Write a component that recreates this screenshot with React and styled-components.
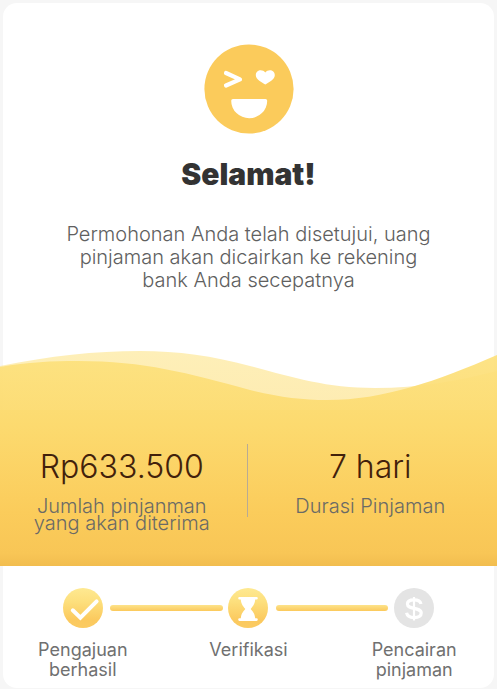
import React from "react";
import styled, { createGlobalStyle } from "styled-components";

const GlobalStyle = createGlobalStyle`
  *, *::before, *::after { box-sizing: border-box; }
  body {
    margin: 0;
    background: #f6f6f6;
    color: #606060;
    font-family: Inter, "Liberation Sans", sans-serif;
    font-weight: 300;
  }
  h1, p, dl, dt, dd, ol { margin: 0; padding: 0; }
`;

const Page = styled.main`
  padding: 3px 0 1px;
`;

const Intro = styled.section`
  display: flex;
  flex-direction: column;
  align-items: center;
  height: 347px;
  margin: 0 3px;
  padding: 41px 58px 0;
  background: #fff;
  border-radius: 14px 14px 0 0;
  text-align: center;
`;

const Face = styled.svg`
  display: block;
  flex: none;
  width: 90px;
  height: 90px;
`;

const Title = styled.h1`
  margin-top: 20px;
  color: #333;
  font-size: 30px;
  font-weight: 900;
  line-height: 40px;
`;

const Message = styled.p`
  margin-top: 29px;
  font-size: 20px;
  line-height: 23px;
`;

const Summary = styled.section`
  position: relative;
  background: linear-gradient(#fff, #fff) center / calc(100% - 6px) 100% no-repeat;
`;

const Wave = styled.svg`
  position: absolute;
  inset: 0;
  display: block;
  width: 100%;
  height: 100%;
`;

const Facts = styled.dl`
  position: relative;
  display: grid;
  grid-template-columns: 49fr 51fr;
  padding: 94px 0 32px;
`;

const Fact = styled.div`
  display: flex;
  flex-direction: column-reverse;
  justify-content: flex-end;
  min-height: 90px;
  text-align: center;

  & + &::before {
    content: "";
    position: absolute;
    top: 94px;
    left: calc(50% - 2px);
    width: 1px;
    height: 73px;
    background: #b9ab93;
  }
`;

const FactValue = styled.dd`
  color: #42210b;
  font-size: 32px;
  line-height: 46px;
`;

const FactLabel = styled.dt`
  margin-top: 8px;
  padding: 0 24px;
  color: #6a6a66;
  font-size: 20px;
  line-height: 17px;
`;

const Progress = styled.section`
  margin: 0 3px;
  padding: 22px 0 8px;
  background: #fff;
  border-radius: 0 0 14px 14px;
`;

const Steps = styled.ol`
  display: grid;
  grid-template-columns: 1fr 1fr 1fr;
  margin: 0 -3px;
  list-style: none;
`;

const Step = styled.li`
  position: relative;
  display: flex;
  flex-direction: column;
  align-items: center;
  text-align: center;

  & + &::before {
    content: "";
    position: absolute;
    top: 17px;
    right: calc(50% + 26px);
    width: calc(100% - 53px);
    height: 6px;
    border-radius: 3px;
    background: linear-gradient(#fde38a, #fbc95c);
  }
`;

const StepIcon = styled.svg`
  display: block;
  width: 40px;
  height: 40px;
`;

const StepLabel = styled.span`
  max-width: 110px;
  margin-top: 12px;
  font-size: 18px;
  font-weight: 400;
  line-height: 20px;
  color: #707070;
`;

function WinkingFace() {
  return (
    <Face viewBox="0 0 90 90" aria-hidden="true">
      <circle cx="45" cy="45" r="44.6" fill="#fbcb5b" />
      <path d="M22 29 36 35.300 22 41.500" fill="none" stroke="#fff" strokeWidth="4.200" strokeLinecap="round" strokeLinejoin="round" />
      <path d="M61.300 40.500C58 38.500 51.800 35.500 51.800 31.200C51.800 25.800 58.500 24.700 61.300 28.600C64.100 24.700 70.800 25.800 70.800 31.200C70.800 35.500 64.600 38.500 61.300 40.500Z" fill="#fff" />
      <path d="M29 55H61.500Q63.200 55 63.200 56.700A18 17.500 0 0 1 27.200 56.700Q27.200 55 29 55Z" fill="#fff" />
    </Face>
  );
}

function WaveBackdrop() {
  return (
    <Wave viewBox="0 0 497 216" preserveAspectRatio="none" aria-hidden="true">
      <defs>
        <linearGradient id="wave-fill" gradientUnits="userSpaceOnUse" x1="0" y1="0" x2="0" y2="216">
          <stop offset="0" stopColor="#fde27e" />
          <stop offset="0.350" stopColor="#fcda6f" />
          <stop offset="0.750" stopColor="#fbcc5b" />
          <stop offset="0.940" stopColor="#f8c656" />
          <stop offset="1" stopColor="#f2bd4f" />
        </linearGradient>
      </defs>
      <path d="M0 16C50 6 95 1 140 1C178 1 213 6 250 16C292 27 325 38 375 38C420 38 457 31 497 21V216H0Z" fill="url(#wave-fill)" opacity="0.550" />
      <path d="M0 17C28 12 52 11 78 11C145 11 187 23 250 40C279 47 302 50 327 50C384 50 437 31 497 5V216H0Z" fill="url(#wave-fill)" opacity="0.930" />
      <path d="M0 60H497V216H0Z" fill="url(#wave-fill)" />
    </Wave>
  );
}

function IconFill({ id }) {
  return (
    <defs>
      <linearGradient id={id} x1="0" y1="0" x2="0" y2="1">
        <stop offset="0" stopColor="#fee991" />
        <stop offset="0.350" stopColor="#fddf7c" />
        <stop offset="0.800" stopColor="#fbc95e" />
        <stop offset="1" stopColor="#fbcb62" />
      </linearGradient>
    </defs>
  );
}

function DoneIcon() {
  return (
    <StepIcon viewBox="0 0 40 40" aria-hidden="true">
      <IconFill id="done-fill" />
      <circle cx="20" cy="20" r="20" fill="url(#done-fill)" />
      <path d="M9.800 22.300 17.400 29.700 33.600 13.400" fill="none" stroke="#fff" strokeWidth="4" strokeLinecap="round" />
    </StepIcon>
  );
}

function HourglassIcon() {
  return (
    <StepIcon viewBox="0 0 40 40" aria-hidden="true">
      <IconFill id="wait-fill" />
      <circle cx="20" cy="20" r="20" fill="url(#wait-fill)" />
      <path d="M11.500 10.200H28.500M11.500 31.600H28.500" stroke="#fff" strokeWidth="2.600" strokeLinecap="round" />
      <path d="M12.800 10.500H27.200C27.200 15.500 25.500 17.500 22.700 20.900C25.500 24.300 27.200 26.300 27.200 31.300H12.800C12.800 26.300 14.500 24.300 17.300 20.900C14.500 17.500 12.800 15.500 12.800 10.500Z" fill="#fff" />
    </StepIcon>
  );
}

function PayoutIcon() {
  return (
    <StepIcon viewBox="0 0 40 40" aria-hidden="true">
      <circle cx="20" cy="20" r="20" fill="#e4e4e4" />
      <path d="M27 16C26.300 13 23.700 11.900 20 11.900C16.200 11.900 13.400 13.400 13.400 16.100C13.400 22 27.200 18.600 27.200 25.100C27.200 28.200 24 29.600 20 29.600C16 29.600 13.200 28.200 12.600 24.800" fill="none" stroke="#fff" strokeWidth="3.200" />
      <path d="M20 9V32.500" stroke="#fff" strokeWidth="2.200" />
    </StepIcon>
  );
}

const facts = [
  { value: "Rp633.500", label: ["Jumlah pinjanman", "yang akan diterima"] },
  { value: "7 hari", label: ["Durasi Pinjaman"] },
];

const steps = [
  { label: "Pengajuan berhasil", Icon: DoneIcon },
  { label: "Verifikasi", Icon: HourglassIcon },
  { label: "Pencairan pinjaman", Icon: PayoutIcon },
];

export default function App() {
  return (
    <>
      <GlobalStyle />
      <Page>
        <Intro>
          <WinkingFace />
          <Title>Selamat!</Title>
          <Message>
            Permohonan Anda telah disetujui, uang pinjaman akan dicairkan ke
            rekening bank Anda secepatnya
          </Message>
        </Intro>
        <Summary>
          <WaveBackdrop />
          <Facts>
            {facts.map(({ value, label }) => (
              <Fact key={value}>
                <FactLabel>
                  {label.map((line, i) => (
                    <React.Fragment key={line}>
                      {i > 0 && <br />}
                      {line}
                    </React.Fragment>
                  ))}
                </FactLabel>
                <FactValue>{value}</FactValue>
              </Fact>
            ))}
          </Facts>
        </Summary>
        <Progress>
          <Steps>
            {steps.map(({ label, Icon }) => (
              <Step key={label}>
                <Icon />
                <StepLabel>{label}</StepLabel>
              </Step>
            ))}
          </Steps>
        </Progress>
      </Page>
    </>
  );
}
